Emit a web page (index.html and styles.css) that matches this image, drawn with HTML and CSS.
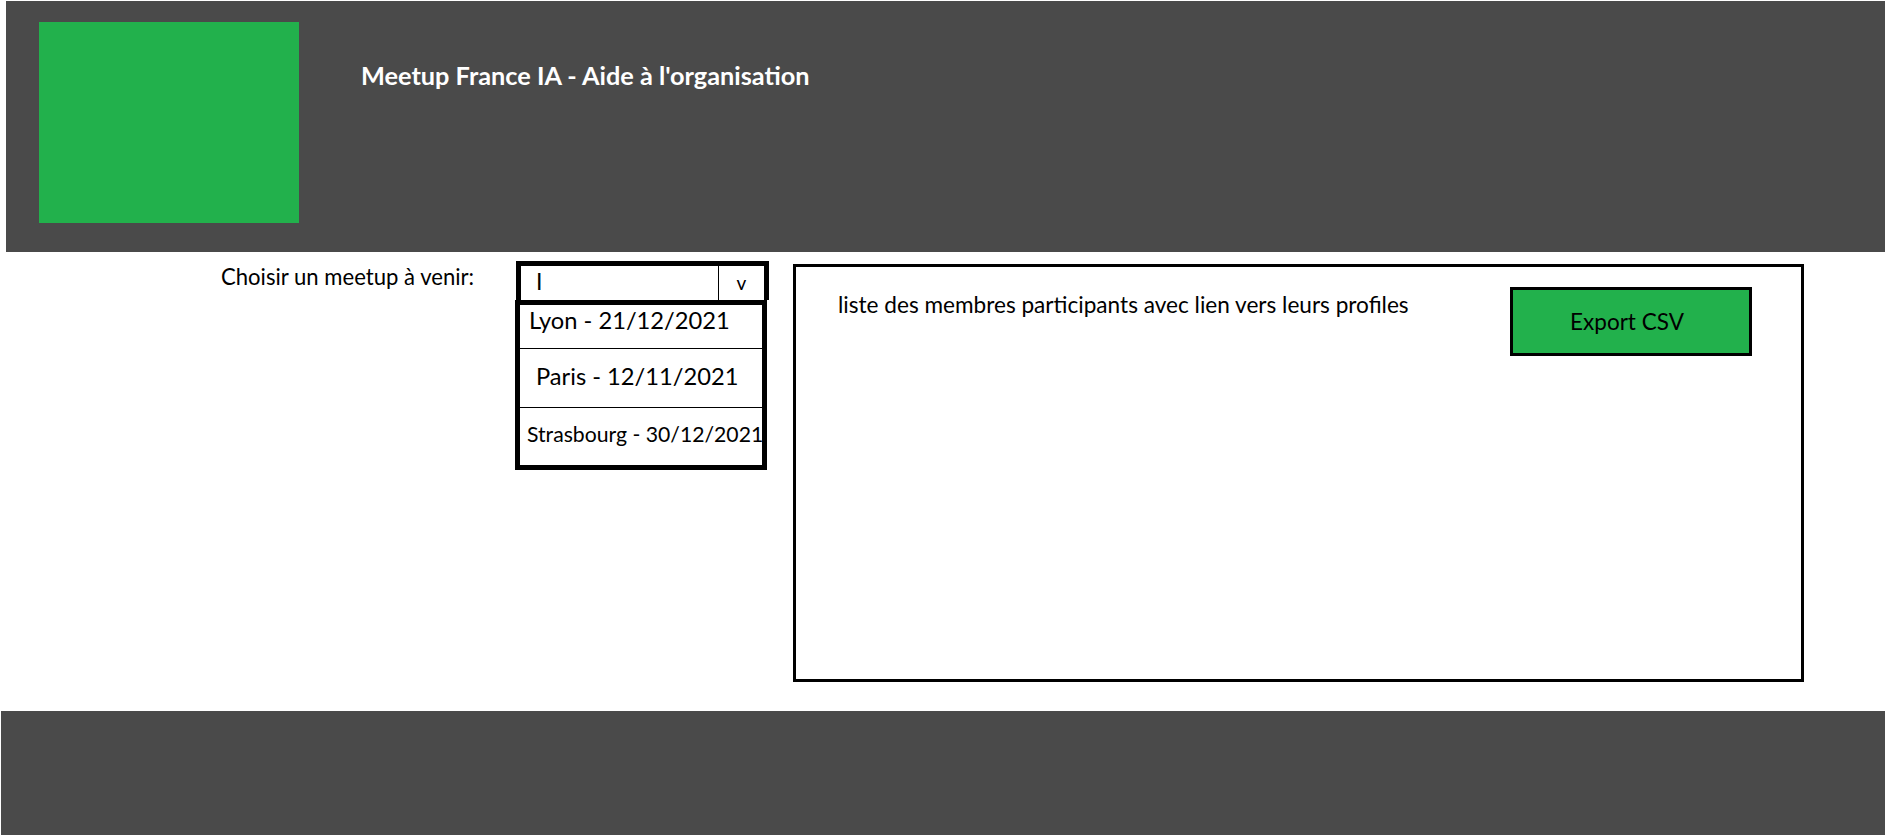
FILE: index.html
```html
<!DOCTYPE html>
<html lang="fr">
<head>
<meta charset="utf-8">
<title>Meetup France IA - Aide à l'organisation</title>
<link rel="stylesheet" href="styles.css">
</head>
<body>
<header class="topbar">
  <div class="logo"></div>
  <h1 class="title">Meetup France IA - Aide à l'organisation</h1>
</header>
<main class="content">
  <label class="picker-label">Choisir un meetup à venir:</label>
  <div class="select">
    <div class="select-head">
      <span class="select-value">I</span>
      <span class="select-arrow">v</span>
    </div>
    <ul class="select-list">
      <li class="option option-lyon">Lyon - 21/12/2021</li>
      <li class="option option-paris">Paris - 12/11/2021</li>
      <li class="option option-stras">Strasbourg - 30/12/2021</li>
    </ul>
  </div>
  <section class="panel">
    <p class="panel-text">liste des membres participants avec lien vers leurs profiles</p>
    <button class="export">Export CSV</button>
  </section>
</main>
<footer class="bottombar"></footer>
</body>
</html>
```
FILE: styles.css
```css
* { box-sizing: border-box; }
html, body { margin: 0; padding: 0; background: #fff; }
body {
  font-family: Lato, "Open Sans", sans-serif;
  color: #000;
  width: 1885px;
  height: 835px;
  overflow: hidden;
}

.topbar {
  margin: 1px 0 0 6px;
  height: 251px;
  background: #4a4a4a;
  display: flex;
  align-items: flex-start;
  padding: 21px 0 0 33px;
  gap: 62px;
}
.logo {
  width: 260px;
  height: 201px;
  background: #22b14c;
  flex: none;
}
.title {
  margin: 41px 0 0 0;
  color: #fff;
  font-size: 25.3px;
  font-weight: 700;
  line-height: 1;
  white-space: nowrap;
}

.content {
  height: 459px;
  display: flex;
  align-items: flex-start;
  padding: 9px 0 0 221px;
}
.picker-label {
  width: 294px;
  flex: none;
  font-size: 22.1px;
  line-height: 1;
  margin-top: 5px;
  white-space: nowrap;
}

.select {
  width: 254px;
  flex: none;
}
.select-head {
  margin-left: 1px;
  width: 253px;
  height: 39px;
  border: 5px solid #000;
  border-bottom: 0;
  display: flex;
}
.select-value {
  flex: 1;
  padding-left: 15px;
  font-size: 23px;
  line-height: 30px;
}
.select-arrow {
  width: 46px;
  border-left: 1px solid #000;
  text-align: center;
  font-size: 19px;
  line-height: 34px;
}
.select-list {
  list-style: none;
  margin: 0;
  padding: 0;
  width: 252px;
  border: 5px solid #000;
}
.option {
  white-space: nowrap;
  line-height: 1;
}
.option-lyon {
  height: 44px;
  padding: 4px 0 0 9px;
  font-size: 23.7px;
  border-bottom: 1px solid #000;
}
.option-paris {
  height: 59px;
  padding: 16px 0 0 16px;
  font-size: 23.7px;
  border-bottom: 1px solid #000;
}
.option-stras {
  height: 57px;
  padding: 16px 0 0 7px;
  font-size: 21.2px;
}

.panel {
  margin: 3px 0 0 24px;
  width: 1011px;
  height: 418px;
  border: 3px solid #000;
  display: flex;
  align-items: flex-start;
  justify-content: space-between;
  padding: 20px 49px 0 42px;
  flex: none;
}
.panel-text {
  margin: 7px 0 0 0;
  font-size: 22.6px;
  line-height: 1;
  white-space: nowrap;
}
.export {
  width: 242px;
  height: 69px;
  background: #22b14c;
  border: 3px solid #000;
  font-family: Lato, "Open Sans", sans-serif;
  font-size: 22.5px;
  color: #000;
  padding: 0 8px 0 0;
  cursor: pointer;
}

.bottombar {
  margin-left: 1px;
  height: 124px;
  background: #4a4a4a;
}
```
